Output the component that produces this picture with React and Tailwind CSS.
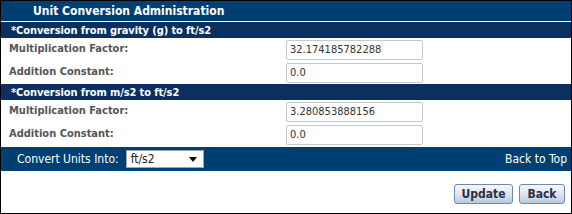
import React from "react";

const font = { fontFamily: "'DejaVu Sans Condensed', 'DejaVu Sans', sans-serif" };

function Row({ label, value }) {
  return (
    <div className="flex items-center h-[23px] bg-white">
      <div className="w-[285px] pl-[8px] text-[11px] font-bold text-[#555555]">{label}</div>
      <input
        readOnly
        value={value}
        className="w-[137px] h-[20px] border border-[#c6c9cc] rounded-[2px] px-[3px] text-[11px] text-[#333] bg-white outline-none"
        style={font}
      />
    </div>
  );
}

function Sub({ children }) {
  return (
    <div className="h-[16px] bg-[#0b2f5e] text-white text-[11px] font-bold tracking-[-0.1px] pl-[10px] flex items-center leading-none">
      {children}
    </div>
  );
}

export default function App() {
  return (
    <div className="w-[572px] h-[214px] border border-black bg-white flex flex-col" style={font}>
      <div className="h-[20px] bg-[#003f72] text-white text-[12px] font-bold pl-[32px] flex items-center leading-none">
        Unit Conversion Administration
      </div>
      <div className="h-[1px] bg-white" />
      <Sub>*Conversion from gravity (g) to ft/s2</Sub>
      <Row label="Multiplication Factor:" value="32.174185782288" />
      <Row label="Addition Constant:" value="0.0" />
      <Sub>*Conversion from m/s2 to ft/s2</Sub>
      <Row label="Multiplication Factor:" value="3.280853888156" />
      <Row label="Addition Constant:" value="0.0" />
      <div className="h-[24px] mt-[1px] bg-[#003f71] flex items-center justify-between text-white text-[12px] pl-[16px] pr-[4px]">
        <div className="flex items-center gap-[7px]">
          <span>Convert Units Into:</span>
          <div className="w-[78px] h-[18px] bg-white border border-[#9aa6b3] flex items-center justify-between pl-[4px] pr-[6px] text-[#222] text-[12px]">
            <span>ft/s2</span>
            <svg width="8" height="5" viewBox="0 0 8 5"><path d="M0 0 H8 L4 5 Z" fill="#000" /></svg>
          </div>
        </div>
        <span>Back to Top</span>
      </div>
      <div className="flex justify-end gap-[6px] pr-[6px] pt-[13px]">
        <button className="h-[20px] w-[59px] rounded-[3px] border border-[#6e87b5] bg-gradient-to-b from-[#f4f7fc] via-[#dfe6f1] to-[#b9c8e0] text-[12px] font-bold text-[#2a2f45] leading-none" style={font}>
          Update
        </button>
        <button className="h-[20px] w-[46px] rounded-[3px] border border-[#6e87b5] bg-gradient-to-b from-[#f4f7fc] via-[#dfe6f1] to-[#b9c8e0] text-[12px] font-bold text-[#2a2f45] leading-none" style={font}>
          Back
        </button>
      </div>
    </div>
  );
}
